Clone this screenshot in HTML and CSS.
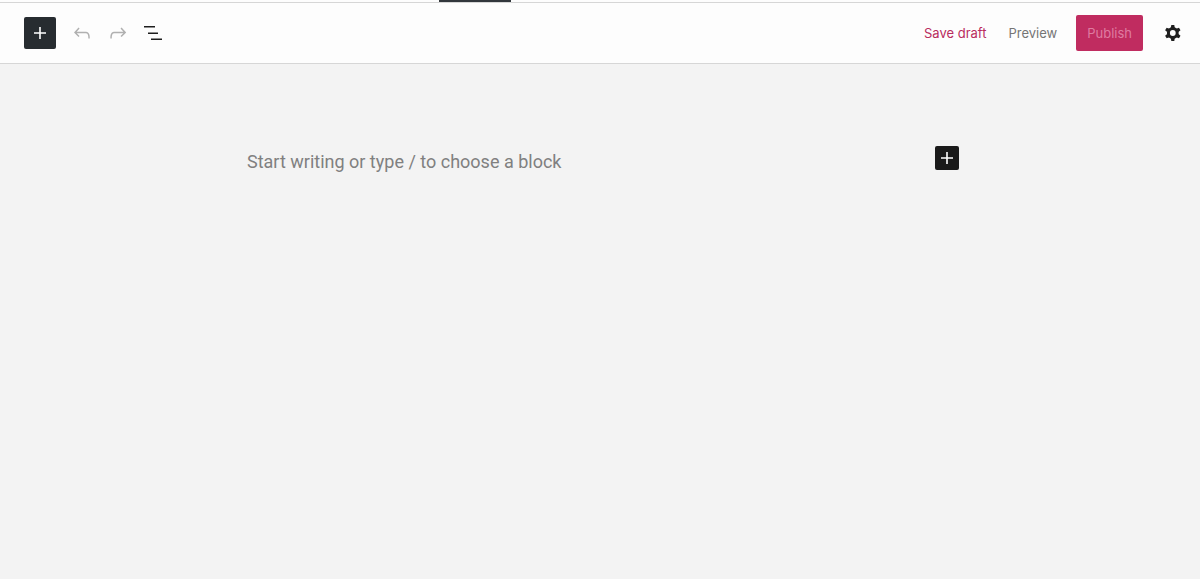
FILE: index.html
```html
<!DOCTYPE html>
<html lang="en">
<head>
    <meta charset="UTF-8">
    <meta name="viewport" content="width=device-width, initial-scale=1.0">
    <title>Edit post</title>
    <link rel="stylesheet" href="styles.css">
</head>
<body>
    <div class="top-strip">
        <div class="strip-tab"></div>
    </div>

    <header class="editor-header">
        <div class="toolbar">
            <button class="inserter" type="button" aria-label="Add block">
                <svg class="icon" viewBox="0 0 24 24">
                    <path d="M18 11.2h-5.2V6h-1.6v5.2H6v1.6h5.2V18h1.6v-5.2H18z"/>
                </svg>
            </button>
            <button class="icon-button faded" type="button" aria-label="Undo">
                <svg class="icon" viewBox="0 0 24 24">
                    <path d="M18.3 11.7c-.6-.6-1.4-.9-2.3-.9H6.7l2.9-3.3-1.1-1-4.5 5L8.5 16l1-1-2.7-2.7H16c.5 0 .9.2 1.3.5 1 1 1 3.4 1 4.5v.3h1.5v-.2c0-1.5 0-4.3-1.5-5.7z"/>
                </svg>
            </button>
            <button class="icon-button faded" type="button" aria-label="Redo">
                <svg class="icon" viewBox="0 0 24 24">
                    <path d="M15.6 6.5l-1.1 1 2.9 3.3H8c-.9 0-1.7.3-2.3.9-1.4 1.5-1.4 4.2-1.4 5.6v.2h1.5v-.3c0-1.1 0-3.5 1-4.5.3-.3.7-.5 1.3-.5h9.2L14.5 15l1.1 1.1 4.6-4.6-4.6-5z"/>
                </svg>
            </button>
            <button class="icon-button" type="button" aria-label="List view">
                <svg class="icon" viewBox="0 0 24 24">
                    <path d="M2 5h11v1.6H2zM6 11.4h10V13H6zM9 17.4h11V19H9z"/>
                </svg>
            </button>
        </div>

        <div class="actions">
            <button class="text-button save" type="button">Save draft</button>
            <button class="text-button preview" type="button">Preview</button>
            <button class="publish" type="button">Publish</button>
            <button class="icon-button" type="button" aria-label="Settings">
                <svg class="icon" viewBox="0 0 24 24">
                    <circle class="cog-ring" cx="11.8" cy="12" r="4.4"/>
                    <g transform="translate(11.8 12)">
                        <path id="tooth" d="M-2-5L-1.500-8h3L2-5z"/>
                        <use href="#tooth" transform="rotate(60)"/>
                        <use href="#tooth" transform="rotate(120)"/>
                        <use href="#tooth" transform="rotate(180)"/>
                        <use href="#tooth" transform="rotate(240)"/>
                        <use href="#tooth" transform="rotate(300)"/>
                    </g>
                </svg>
            </button>
        </div>
    </header>

    <main class="canvas">
        <div class="block-row">
            <input class="block-input" type="text" aria-label="Empty block" placeholder="Start writing or type / to choose a block">
            <button class="block-add" type="button" aria-label="Add block">
                <svg class="icon" viewBox="0 0 24 24">
                    <path d="M18 11.2h-5.2V6h-1.6v5.2H6v1.6h5.2V18h1.6v-5.2H18z"/>
                </svg>
            </button>
        </div>
    </main>
</body>
</html>
```

FILE: styles.css
```css
* {
    margin: 0;
    padding: 0;
    box-sizing: border-box;
}

body {
    font-family: Inter, "Liberation Sans", sans-serif;
    font-size: 13px;
    background: #f3f3f3;
    color: #1e1e1e;
    min-height: 100vh;
}

button {
    border: none;
    background: none;
    font: inherit;
    color: inherit;
    cursor: pointer;
}

.icon {
    display: block;
    width: 24px;
    height: 24px;
    fill: currentColor;
}

.cog-ring {
    fill: none;
    stroke: currentColor;
    stroke-width: 3;
}

.top-strip {
    height: 3px;
    padding-left: 439px;
    background: #fdfdfd;
    border-bottom: 1px solid #d6d6d6;
}

.strip-tab {
    width: 72px;
    height: 2px;
    background: #32373c;
}

/* Header */
.editor-header {
    display: flex;
    justify-content: space-between;
    align-items: center;
    height: 61px;
    padding: 0 9px 0 24px;
    background: #fdfdfd;
    border-bottom: 1px solid #d6d6d6;
}

.toolbar {
    display: flex;
    align-items: center;
}

.inserter {
    display: flex;
    align-items: center;
    justify-content: center;
    width: 32px;
    height: 32px;
    margin-right: 8px;
    border-radius: 2px;
    background: #272c30;
    color: #fff;
}

.icon-button {
    display: flex;
    align-items: center;
    justify-content: center;
    width: 36px;
    height: 36px;
}

.faded {
    color: #b0b0b0;
}

.actions {
    display: flex;
    align-items: center;
}

.text-button {
    height: 36px;
    padding: 0 11px;
}

.save {
    color: #b92c5e;
}

.preview {
    color: #757575;
}

.publish {
    height: 36px;
    margin: 0 12px 0 8px;
    padding: 0 11px;
    border-radius: 2px;
    background: #c02c60;
    color: #df7ba0;
}

/* Canvas */
.canvas {
    padding-top: 82px;
}

.block-row {
    display: flex;
    align-items: flex-start;
    max-width: 718px;
    margin: 0 auto;
}

.block-input {
    flex: 1;
    min-width: 0;
    height: 30px;
    padding: 0 6px;
    border: none;
    outline: none;
    background: none;
    font-family: Roboto, "Liberation Sans", sans-serif;
    font-size: 18px;
    color: #1e1e1e;
}

.block-input::placeholder {
    color: #808080;
}

.block-add {
    border-radius: 2px;
    background: #1a1a1a;
    color: #fff;
}
```
